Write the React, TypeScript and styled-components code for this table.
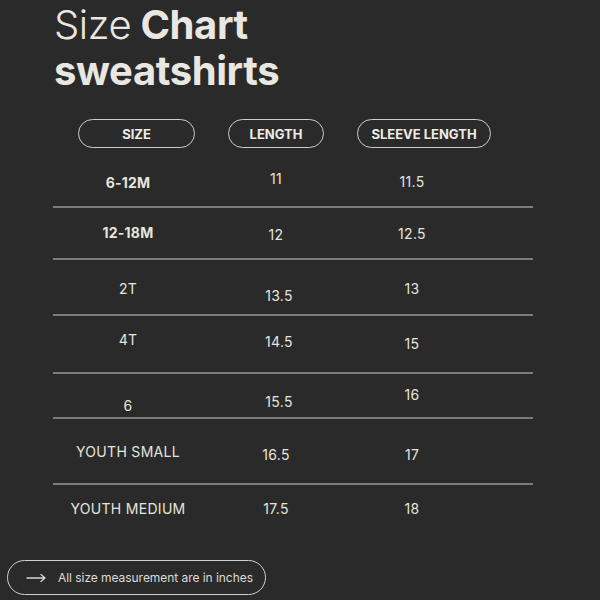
import React from "react";
import styled, { createGlobalStyle } from "styled-components";

const Global = createGlobalStyle`
  html, body { margin: 0; padding: 0; background: #2a2a2a; }
  body { font-family: Inter, "Noto Sans", sans-serif; color: #e8e6e0; }
`;

const Page = styled.div`
  width: 600px;
  height: 600px;
  background: #2a2a2a;
  box-sizing: border-box;
  padding-top: 2px;
  display: flex;
  flex-direction: column;
  overflow: hidden;
`;

const Title = styled.h1`
  margin: 0 0 0 54px;
  font-size: 40px;
  line-height: 46px;
  font-weight: 700;
  letter-spacing: -0.4px;
  color: #e9e7e1;
`;

const Light = styled.span`
  font-weight: 300;
`;

const HeaderRow = styled.div`
  display: flex;
  gap: 33px;
  margin: 25px 0 0 78px;
  height: 29px;
`;

const Pill = styled.div<{ $w: number }>`
  width: ${(p) => p.$w}px;
  box-sizing: border-box;
  height: 29px;
  border: 1.5px solid #cfcdc8;
  border-radius: 15px;
  display: flex;
  align-items: center;
  justify-content: center;
  font-size: 13px;
  font-weight: 700;
  color: #ecebe6;
`;

const Table = styled.div`
  margin-left: 53px;
  width: 480px;
  display: flex;
  flex-direction: column;
`;

const Row = styled.div<{ $h: number; $last?: boolean }>`
  display: grid;
  grid-template-columns: 150px 146px 126px 1fr;
  box-sizing: border-box;
  height: ${(p) => p.$h}px;
  border-bottom: ${(p) => (p.$last ? "none" : "2px solid #7c7c7c")};
`;

const Cell = styled.div<{ $dy: number; $dx?: number; $bold?: boolean }>`
  padding-top: ${(p) => p.$dy}px;
  padding-left: ${(p) => (p.$dx || 0) * 2}px;
  text-align: center;
  font-size: 14px;
  line-height: 16px;
  font-weight: ${(p) => (p.$bold ? 700 : 400)};
  color: #e6e4de;
  letter-spacing: ${(p) => (p.$bold ? "0.2px" : "0.3px")};
`;

const Footer = styled.div`
  margin: 20px 0 0 7px;
  width: 259px;
  height: 35px;
  box-sizing: border-box;
  border: 1.5px solid #d2d0cb;
  border-radius: 18px;
  display: flex;
  align-items: center;
  padding-left: 18px;
  gap: 12px;
  font-size: 12px;
  letter-spacing: -0.05px;
  white-space: nowrap;
  color: #dedcd6;
`;

type C = [string, number, number?];
type R = { h: number; cells: C[]; bold?: boolean };

const rows: R[] = [
  { h: 58, bold: true, cells: [["6-12M", 27], ["11", 23], ["11.5", 26]] },
  { h: 50, bold: true, cells: [["12-18M", 17], ["12", 19], ["12.5", 18]] },
  { h: 54, cells: [["2T", 21], ["13.5", 28, 3], ["13", 21]] },
  { h: 56, cells: [["4T", 16], ["14.5", 18, 3], ["15", 20]] },
  { h: 43, cells: [["6", 24], ["15.5", 20, 3], ["16", 13]] },
  { h: 64, cells: [["YOUTH SMALL", 25], ["16.5", 28], ["17", 28]] },
  { h: 55, cells: [["YOUTH MEDIUM", 16], ["17.5", 16], ["18", 16]] },
];

const Arrow = () => (
  <svg width="20" height="10" viewBox="0 0 20 10" fill="none" stroke="#d8d6d0" strokeWidth="1.3" strokeLinecap="round" strokeLinejoin="round">
    <path d="M1 5h18M15 1.5L19 5l-4 3.5" />
  </svg>
);

export default function App() {
  return (
    <Page>
      <Global />
      <Title>
        <Light>Size</Light> Chart
        <br />
        sweatshirts
      </Title>
      <HeaderRow>
        <Pill $w={117}>SIZE</Pill>
        <Pill $w={96}>LENGTH</Pill>
        <Pill $w={134}>SLEEVE LENGTH</Pill>
      </HeaderRow>
      <Table>
        {rows.map((r, i) => (
          <Row key={i} $h={r.h + (i === rows.length - 1 ? 0 : 2)} $last={i === rows.length - 1}>
            {r.cells.map(([t, dy, dx], j) => (
              <Cell key={j} $dy={dy} $dx={dx} $bold={j === 0 && r.bold}>
                {t}
              </Cell>
            ))}
          </Row>
        ))}
      </Table>
      <Footer>
        <Arrow />
        All size measurement are in inches
      </Footer>
    </Page>
  );
}
